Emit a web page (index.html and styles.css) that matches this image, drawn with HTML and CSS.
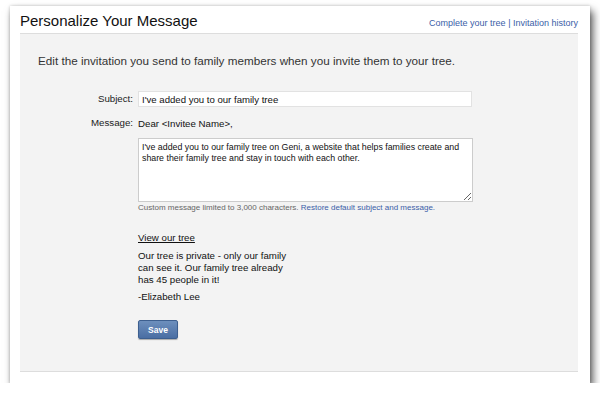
FILE: index.html
```html
<!DOCTYPE html>
<html lang="en">
<head>
    <meta charset="UTF-8">
    <title>Personalize Your Message</title>
    <link rel="stylesheet" href="styles.css">
</head>
<body>
    <div class="window">
        <div class="header">
            <h1>Personalize Your Message</h1>
            <div class="links"><a href="#">Complete your tree</a> | <a href="#">Invitation history</a></div>
        </div>
        <div class="panel">
            <p class="intro">Edit the invitation you send to family members when you invite them to your tree.</p>
            <div class="row">
                <label class="label">Subject:</label>
                <input class="subject" type="text" value="I've added you to our family tree">
            </div>
            <div class="row">
                <span class="label">Message:</span>
                <div class="message">
                    <div class="dear">Dear &lt;Invitee Name&gt;,</div>
                    <textarea>I've added you to our family tree on Geni, a website that helps families create and share their family tree and stay in touch with each other.</textarea>
                    <div class="hint">Custom message limited to 3,000 characters. <a href="#">Restore default subject and message.</a></div>
                    <a class="view" href="#">View our tree</a>
                    <p class="note">Our tree is private - only our family can see it. Our family tree already has 45 people in it!</p>
                    <p class="sign">-Elizabeth Lee</p>
                    <button>Save</button>
                </div>
            </div>
        </div>
    </div>
</body>
</html>
```

FILE: styles.css
```css
body {
    margin: 0;
    background: #fff;
    font-family: "Liberation Sans", Arial, sans-serif;
    color: #222;
}
.window {
    margin: 6px 0 0 10px;
    width: 580px;
    height: 377px;
    box-sizing: border-box;
    padding: 0 12px 11px 10px;
    background: #fff;
    box-shadow: 3px 5px 8px rgba(0, 0, 0, 0.65), 0 0 3px rgba(0, 0, 0, 0.2);
    display: flex;
    flex-direction: column;
}
.header {
    height: 27px;
    display: flex;
    justify-content: space-between;
    align-items: flex-end;
    border-bottom: 1px solid #ddd;
}
h1 {
    margin: 0 0 4px 0;
    font-size: 15px;
    font-weight: normal;
    color: #111;
}
.links {
    font-size: 9px;
    color: #3b5ea8;
    margin-bottom: 5px;
}
a {
    color: #3b5ea8;
    text-decoration: none;
}
.panel {
    flex: 1;
    background: #f3f3f3;
    border-bottom: 1px solid #ddd;
    padding: 0 18px;
}
.intro {
    margin: 20px 0 24px 0;
    font-size: 11.7px;
    color: #333;
}
.row {
    display: flex;
    gap: 5px;
    margin-bottom: 8px;
}
.label {
    width: 95px;
    text-align: right;
    font-size: 9.7px;
    color: #222;
    padding-top: 2px;
}
.subject {
    width: 334px;
    height: 16px;
    box-sizing: border-box;
    border: 1px solid #e2e2e2;
    background: #fff;
    font-family: "Liberation Sans", Arial, sans-serif;
    font-size: 9.6px;
    padding: 0 3px;
    color: #111;
}
.message {
    display: flex;
    flex-direction: column;
    align-items: flex-start;
    font-size: 9.7px;
}
.dear {
    padding-top: 3px;
    color: #111;
}
textarea {
    margin-top: 9px;
    width: 335px;
    height: 64px;
    box-sizing: border-box;
    border: 1px solid #ccc;
    background: #fff;
    font-family: "Liberation Sans", Arial, sans-serif;
    font-size: 8.8px;
    line-height: 11px;
    padding: 3px 3px;
    color: #111;
    resize: vertical;
}
.hint {
    margin-top: 1px;
    font-size: 8px;
    color: #666;
}
.view {
    margin-top: 20px;
    color: #111;
    text-decoration: underline;
}
.note {
    width: 152px;
    margin: 7px 0 0 0;
    line-height: 12px;
    color: #111;
}
.sign {
    margin: 5px 0 0 0;
    color: #111;
}
button {
    margin-top: 18px;
    width: 40px;
    height: 19px;
    border: 1px solid #3d5f8f;
    border-radius: 2px;
    background: linear-gradient(#6d8fbd, #4a6ea3);
    color: #fff;
    font-family: "Liberation Sans", Arial, sans-serif;
    font-weight: bold;
    font-size: 8.5px;
    box-shadow: 0 1px 1px rgba(0, 0, 0, 0.3);
}
```
